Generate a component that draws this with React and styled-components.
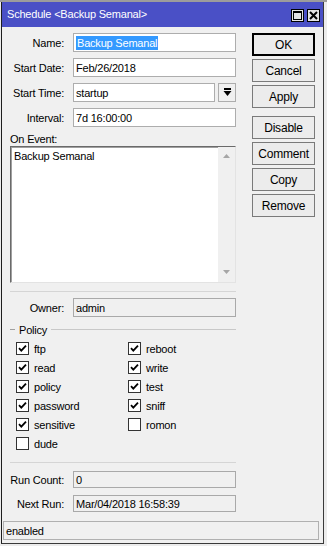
import React from 'react';
import styled, { createGlobalStyle } from 'styled-components';

const GlobalStyle = createGlobalStyle`
  html, body {
    margin: 0;
    padding: 0;
    background: #ececec;
  }
  body {
    font-family: 'Liberation Sans', Arial, sans-serif;
    font-size: 11px;
    letter-spacing: -0.2px;
    color: #000;
  }
`;

function CheckMark() {
  return (
    <svg width="11" height="11" viewBox="0 0 11 11">
      <path d="M2 5.2 L4.3 7.6 L9 2.6" fill="none" stroke="#000" strokeWidth="1.8" />
    </svg>
  );
}

function DropIcon() {
  return (
    <svg width="9" height="9" viewBox="0 0 9 9">
      <rect x="1" y="0" width="7" height="2" fill="#000" />
      <path d="M0.5 3 H8.5 L4.5 8 Z" fill="#000" />
    </svg>
  );
}

function MaxIcon() {
  return (
    <svg width="9" height="9" viewBox="0 0 9 9">
      <rect x="0.5" y="0.5" width="8" height="8" fill="none" stroke="#000" />
      <rect x="0" y="0" width="9" height="2" fill="#000" />
    </svg>
  );
}

function CloseIcon() {
  return (
    <svg width="9" height="9" viewBox="0 0 9 9">
      <path d="M1 1 L8 8 M8 1 L1 8" stroke="#000" strokeWidth="2" />
    </svg>
  );
}

function Arrow({ up }) {
  return (
    <svg width="7" height="4" viewBox="0 0 7 4">
      <path d={up ? 'M0 4 L3.5 0 L7 4 Z' : 'M0 0 L7 0 L3.5 4 Z'} fill="#a6a6a6" />
    </svg>
  );
}

const policies = [
  ['ftp', true], ['reboot', true],
  ['read', true], ['write', true],
  ['policy', true], ['test', true],
  ['password', true], ['sniff', true],
  ['sensitive', true], ['romon', false],
  ['dude', false],
];

export default function App() {
  return (
    <Page>
      <GlobalStyle />
      <Window>
        <TitleBar>
          <Title>Schedule &lt;Backup Semanal&gt;</Title>
          <TitleButtons>
            <TitleButton><MaxIcon /></TitleButton>
            <TitleButton><CloseIcon /></TitleButton>
          </TitleButtons>
        </TitleBar>
        <Body>
          <Form>
            <Row>
              <Label>Name:</Label>
              <Input>
                <Selected>Backup Semanal</Selected>
              </Input>
            </Row>
            <Row>
              <Label>Start Date:</Label>
              <Input>Feb/26/2018</Input>
            </Row>
            <Row>
              <Label>Start Time:</Label>
              <Input>startup</Input>
              <DropButton><DropIcon /></DropButton>
            </Row>
            <Row>
              <Label>Interval:</Label>
              <Input>7d 16:00:00</Input>
            </Row>
            <EventLabel>On Event:</EventLabel>
            <TextArea>
              <TextContent>Backup Semanal</TextContent>
              <ScrollBar>
                <Arrow up />
                <Arrow />
              </ScrollBar>
            </TextArea>
            <Separator />
            <Row $top={6}>
              <Label>Owner:</Label>
              <Input $readonly>admin</Input>
            </Row>
            <GroupHeader>
              <Dash />
              <GroupTitle>Policy</GroupTitle>
              <GroupLine />
            </GroupHeader>
            <CheckGrid>
              {policies.map(([name, checked]) => (
                <CheckItem key={name}>
                  <Box>{checked && <CheckMark />}</Box>
                  <span>{name}</span>
                </CheckItem>
              ))}
            </CheckGrid>
            <Separator $top={12} />
            <Row $top={8}>
              <Label>Run Count:</Label>
              <Input $readonly $h={17}>0</Input>
            </Row>
            <Row $top={7}>
              <Label>Next Run:</Label>
              <Input $readonly $h={17}>Mar/04/2018 16:58:39</Input>
            </Row>
          </Form>
          <Buttons>
            <Button $default>OK</Button>
            <Button>Cancel</Button>
            <Button>Apply</Button>
            <Button $top={8}>Disable</Button>
            <Button>Comment</Button>
            <Button>Copy</Button>
            <Button>Remove</Button>
          </Buttons>
        </Body>
        <StatusBar>enabled</StatusBar>
      </Window>
    </Page>
  );
}

const Page = styled.div`
  width: 327px;
  height: 546px;
  border-top: 2px solid #9c9c9c;
  box-sizing: border-box;
  overflow: hidden;
`;

const Window = styled.div`
  margin-left: 1px;
  width: 323px;
  height: 542px;
  box-sizing: border-box;
  background: #f0f0f0;
  border-left: 1px solid #1e1e1e;
  border-right: 1px solid #3a3a3a;
  border-bottom: 1px solid #3a3a3a;
  display: flex;
  flex-direction: column;
`;

const TitleBar = styled.div`
  height: 25px;
  background: #4a50c6;
  display: flex;
  align-items: center;
  justify-content: space-between;
  padding: 0 3px 0 5px;
`;

const Title = styled.span`
  color: #fff;
  font-size: 11px;
  padding-bottom: 1px;
`;

const TitleButtons = styled.div`
  display: flex;
  gap: 3px;
  padding-top: 2px;
`;

const TitleButton = styled.div`
  width: 13px;
  height: 13px;
  box-sizing: border-box;
  border: 1px solid #000;
  background: #e4e4e4;
  display: flex;
  align-items: center;
  justify-content: center;
`;

const Body = styled.div`
  flex: 1;
  display: flex;
  padding: 6px 8px 0 8px;
  gap: 16px;
`;

const Form = styled.div`
  width: 226px;
  display: flex;
  flex-direction: column;
`;

const Row = styled.div`
  display: flex;
  align-items: center;
  margin-top: ${({ $top }) => ($top != null ? $top : 6)}px;
  &:first-child {
    margin-top: 0;
  }
`;

const Label = styled.span`
  width: 54px;
  text-align: right;
  margin-right: 9px;
  white-space: nowrap;
`;

const Input = styled.div`
  flex: 1;
  height: ${({ $h }) => $h || 19}px;
  box-sizing: border-box;
  border: 1px solid ${({ $readonly }) => ($readonly ? '#a9a9a9' : '#adadad')};
  background: ${({ $readonly }) => ($readonly ? '#f0f0f0' : '#fff')};
  display: flex;
  align-items: center;
  padding-left: 2px;
  white-space: nowrap;
`;

const Selected = styled.span`
  background: #3399ff;
  color: #fff;
  padding: 1px 1px 1px 1px;
`;

const DropButton = styled.div`
  width: 18px;
  height: 19px;
  box-sizing: border-box;
  margin-left: 3px;
  border: 1px solid #adadad;
  background: #f0f0f0;
  display: flex;
  align-items: center;
  justify-content: center;
`;

const EventLabel = styled.div`
  margin-top: 6px;
  height: 13px;
  line-height: 13px;
`;

const TextArea = styled.div`
  height: 137px;
  box-sizing: border-box;
  border: 1px solid;
  border-color: #6a6a6a #e3e3e3 #e3e3e3 #6a6a6a;
  box-shadow: inset 1px 1px 0 #a0a0a0;
  background: #fff;
  display: flex;
`;

const TextContent = styled.div`
  flex: 1;
  padding: 3px 0 0 3px;
`;

const ScrollBar = styled.div`
  width: 17px;
  background: #f0f0f0;
  display: flex;
  flex-direction: column;
  align-items: center;
  justify-content: space-between;
  padding: 7px 0 8px;
`;

const Separator = styled.div`
  margin-top: ${({ $top }) => $top || 8}px;
  height: 1px;
  background: #d5d5d5;
`;

const GroupHeader = styled.div`
  display: flex;
  align-items: center;
  margin-top: 6px;
  height: 13px;
`;

const Dash = styled.div`
  width: 5px;
  height: 1px;
  background: #a0a0a0;
`;

const GroupTitle = styled.span`
  margin: 0 4px 0 4px;
`;

const GroupLine = styled.div`
  flex: 1;
  height: 1px;
  background: #c8c8c8;
`;

const CheckGrid = styled.div`
  display: grid;
  grid-template-columns: 112px 1fr;
  row-gap: 6px;
  padding-left: 6px;
  margin-top: 6px;
`;

const CheckItem = styled.div`
  display: flex;
  align-items: center;
  gap: 5px;
  height: 13px;
`;

const Box = styled.div`
  width: 13px;
  height: 13px;
  box-sizing: border-box;
  border: 1px solid #333;
  background: #fff;
  display: flex;
  align-items: center;
  justify-content: center;
`;

const Buttons = styled.div`
  width: 63px;
  display: flex;
  flex-direction: column;
`;

const Button = styled.div`
  height: 23px;
  box-sizing: border-box;
  margin-top: ${({ $top }) => ($top != null ? $top : 3)}px;
  border: ${({ $default }) => ($default ? '2px solid #000' : '1px solid #7a7a7a')};
  background: #ececec;
  display: flex;
  align-items: center;
  justify-content: center;
  font-size: 12px;
  &:first-child {
    margin-top: 0;
  }
`;

const StatusBar = styled.div`
  margin: 0 4px 3px 1px;
  height: 19px;
  box-sizing: border-box;
  border: 1px solid #b0b0b0;
  background: #f0f0f0;
  display: flex;
  align-items: center;
  padding-left: 2px;
`;
